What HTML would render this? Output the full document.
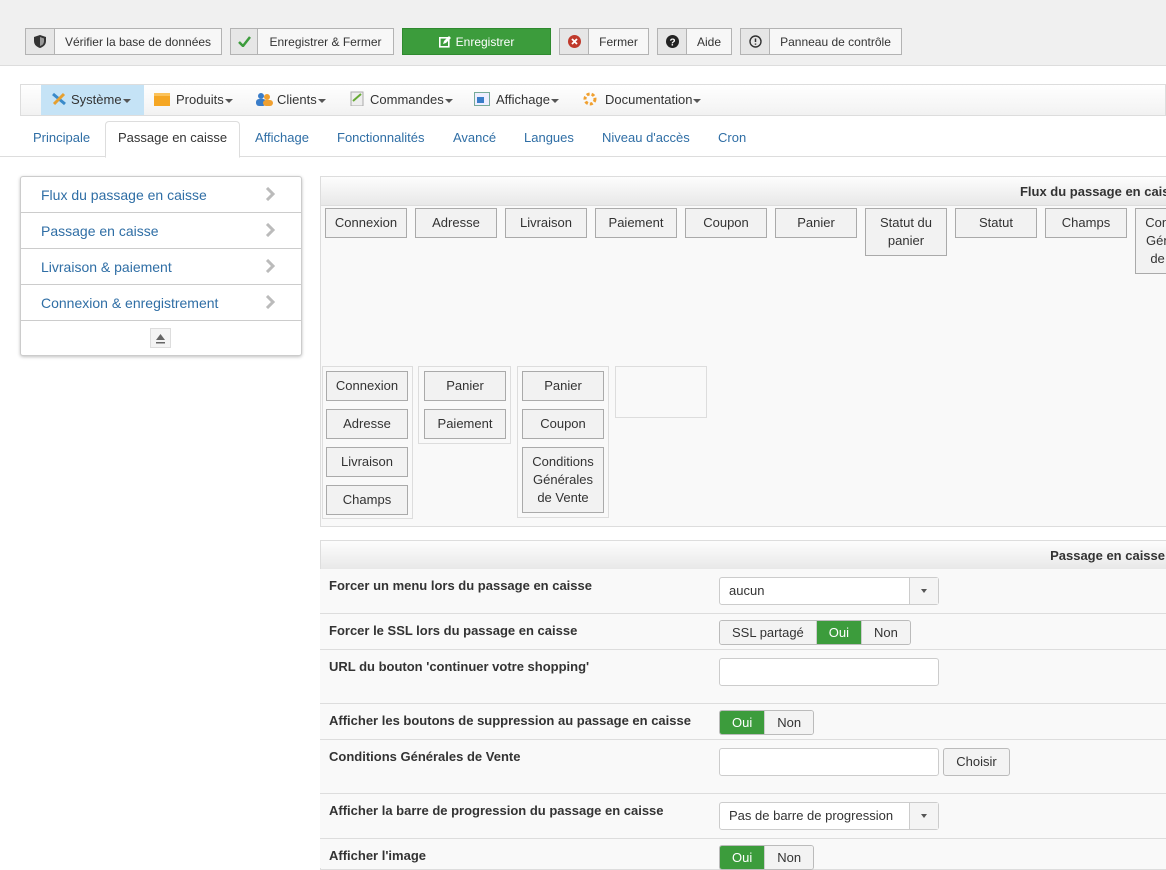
<!DOCTYPE html>
<html><head><meta charset="utf-8"><style>
*{box-sizing:border-box;margin:0;padding:0}
body{width:1166px;height:851px;overflow:hidden;background:#fff;font-family:"Liberation Sans",Arial,sans-serif;font-size:13px;color:#333;position:relative}
.a{position:absolute}
.tb{position:absolute;left:0;top:0;width:1166px;height:66px;background:#f0f0f0;border-bottom:1px solid #ddd}
.btn{position:absolute;top:28px;height:27px;border:1px solid #b3b3b3;background:#f7f7f7;font-size:12px;color:#333;display:flex;align-items:center}
.btn .ic{height:100%;border-right:1px solid #b3b3b3;background:#e6e6e6;display:flex;align-items:center;justify-content:center}
.btn .t{flex:1;text-align:center}
.menu{position:absolute;left:20px;top:84px;width:1146px;height:32px;border:1px solid #ddd;background:linear-gradient(#fff,#f2f2f2)}
.mi{position:absolute;top:0;height:30px;line-height:30px;font-size:13px;color:#333}
.car{display:inline-block;border-top:4px solid #555;border-left:4px solid transparent;border-right:4px solid transparent;vertical-align:middle;margin-left:1px}
.tabs{position:absolute;left:0;top:121px;width:1166px;height:36px;border-bottom:1px solid #ddd}
.tab{position:absolute;top:0;height:36px;line-height:34px;color:#2f6ea5;font-size:13px}
.side{position:absolute;left:20px;top:176px;width:282px;height:180px;border:1px solid #ccc;border-radius:3px;box-shadow:0 1px 3px rgba(0,0,0,.25);background:#fff}
.si{position:absolute;left:0;width:280px;height:36px;border-bottom:1px solid #ccc;color:#2f6ea5;font-size:14px;line-height:36px;padding-left:20px}
.si svg{position:absolute;right:26px;top:10px}
.pan{position:absolute;left:320px;border:1px solid #ddd;background:#f9f9f9}
.ph{height:29px;background:linear-gradient(#fdfdfd,#e8e8e8);border-bottom:1px solid #ddd;text-align:right;font-weight:bold;font-size:13px;line-height:29px;padding-right:15px}
.fb{position:absolute;width:82px;border:1px solid #aaa;background:#f2f2f2;text-align:center;font-size:13px;line-height:18px;padding:5px 2px}
.col{position:absolute;border:1px solid #ddd;background:#f9f9f9}
.row{position:absolute;left:320px;width:860px;border-top:1px solid #ddd;background:#f9f9f9}
.lb{position:absolute;left:9px;top:9px;font-weight:bold;font-size:13px;color:#333}
.inp{position:absolute;left:399px;width:220px;height:28px;border:1px solid #ccc;border-radius:3px;background:#fff}
.sel{position:absolute;left:399px;width:220px;height:28px;border:1px solid #ccc;border-radius:3px;background:#fff;line-height:26px;padding-left:9px;font-size:13px}
.sel i{position:absolute;right:0;top:0;width:29px;height:26px;border-left:1px solid #ccc;background:#f4f4f4}
.sel i:after{content:"";position:absolute;left:11px;top:11px;border-top:4px solid #555;border-left:3px solid transparent;border-right:3px solid transparent}
.tg{position:absolute;left:399px;height:25px;display:flex;border:1px solid #bbb;border-radius:3px;overflow:hidden;font-size:13px}
.tg span{padding:0 12px;line-height:23px;background:#f3f3f3;border-left:1px solid #ccc}
.tg span:first-child{border-left:none}
.tg .on{background:#3c9c3c;color:#fff}
</style></head><body>
<div class="tb"></div>
<div class="btn" style="left:25px;width:197px"><div class="ic" style="width:29px"><svg width="12" height="13" viewBox="0 0 12 13"><path d="M6 0L12 2V6C12 10 9 12 6 13 3 12 0 10 0 6V2Z" fill="#333"/><path d="M6 2L10 3.5V6C10 9 8 10.5 6 11Z" fill="#999"/></svg></div><div class="t">Vérifier la base de données</div></div>
<div class="btn" style="left:230px;width:164px"><div class="ic" style="width:27px"><svg width="13" height="11" viewBox="0 0 13 11"><path d="M1 6L5 10 12 1" stroke="#3c9c3c" stroke-width="2.5" fill="none"/></svg></div><div class="t">Enregistrer &amp; Fermer</div></div>
<div class="btn" style="left:402px;width:149px;background:#3c9c3c;border-color:#2f8a2f;color:#fff;justify-content:center"><svg width="12" height="12" viewBox="0 0 12 12" style="margin-right:5px"><rect x="0.8" y="1.8" width="9" height="9" fill="none" stroke="#fff" stroke-width="1.6"/><path d="M4 8L5 5 10 0 12 2 7 7Z" fill="#fff"/></svg>Enregistrer</div>
<div class="btn" style="left:559px;width:90px"><div class="ic" style="width:29px"><svg width="13" height="13"><circle cx="6.5" cy="6.5" r="6.5" fill="#c0392b"/><path d="M4 4L9 9M9 4L4 9" stroke="#fff" stroke-width="1.8"/></svg></div><div class="t">Fermer</div></div>
<div class="btn" style="left:657px;width:75px"><div class="ic" style="width:29px"><svg width="13" height="13"><circle cx="6.5" cy="6.5" r="6.5" fill="#222"/><text x="6.5" y="10.5" font-size="10" font-weight="bold" fill="#fff" text-anchor="middle" font-family="Liberation Sans">?</text></svg></div><div class="t">Aide</div></div>
<div class="btn" style="left:740px;width:162px"><div class="ic" style="width:29px"><svg width="13" height="13"><circle cx="6.5" cy="6.5" r="5.5" fill="none" stroke="#333" stroke-width="1.4"/><path d="M6.5 3.5V7M6.5 8.5V9.8" stroke="#333" stroke-width="1.5"/></svg></div><div class="t">Panneau de contrôle</div></div>

<div class="menu">
<div class="a" style="left:20px;top:0;width:103px;height:30px;background:#c5e3f6"></div>
<div class="mi" style="left:30px"><svg width="16" height="14" style="vertical-align:-2px;margin-right:4px"><path d="M2 2L14 12" stroke="#3a8ac9" stroke-width="3"/><path d="M13 2L3 12" stroke="#e6a030" stroke-width="3"/></svg>Système<span class="car"></span></div>
<div class="mi" style="left:133px"><svg width="16" height="14" style="vertical-align:-2px;margin-right:6px"><rect x="0" y="1" width="16" height="13" fill="#f5a623"/><rect x="0" y="1" width="16" height="3" fill="#fbc25a"/></svg>Produits<span class="car"></span></div>
<div class="mi" style="left:234px"><svg width="18" height="14" style="vertical-align:-2px;margin-right:4px"><circle cx="6" cy="4" r="3" fill="#3a7dc9"/><rect x="1" y="7" width="10" height="7" rx="3" fill="#3a7dc9"/><circle cx="12" cy="5" r="3" fill="#f0a030"/><rect x="8" y="8" width="10" height="6" rx="3" fill="#f0a030"/></svg>Clients<span class="car"></span></div>
<div class="mi" style="left:328px"><svg width="16" height="15" style="vertical-align:-2px;margin-right:5px"><rect x="2" y="1" width="12" height="14" fill="#eee" stroke="#aaa"/><path d="M4 10L12 3" stroke="#6a3" stroke-width="2"/></svg>Commandes<span class="car"></span></div>
<div class="mi" style="left:453px"><svg width="16" height="14" style="vertical-align:-2px;margin-right:6px"><rect x="0.5" y="0.5" width="15" height="13" fill="#eef" stroke="#7a9"/><rect x="3" y="5" width="7" height="6" fill="#3a7dc9"/></svg>Affichage<span class="car"></span></div>
<div class="mi" style="left:561px"><svg width="16" height="14" style="vertical-align:-2px;margin-right:7px"><circle cx="8" cy="7" r="5" fill="none" stroke="#f0a030" stroke-width="3" stroke-dasharray="3 2"/></svg>Documentation<span class="car"></span></div>
</div>

<div class="tabs">
<div class="a" style="left:105px;top:0;width:135px;height:37px;border:1px solid #ddd;border-bottom-color:#fff;border-radius:4px 4px 0 0;background:#fff"></div>
<div class="tab" style="left:33px">Principale</div>
<div class="tab" style="left:118px;color:#333">Passage en caisse</div>
<div class="tab" style="left:255px">Affichage</div>
<div class="tab" style="left:337px">Fonctionnalités</div>
<div class="tab" style="left:453px">Avancé</div>
<div class="tab" style="left:524px">Langues</div>
<div class="tab" style="left:602px">Niveau d'accès</div>
<div class="tab" style="left:718px">Cron</div>
</div>

<div class="side">
<div class="si" style="top:0">Flux du passage en caisse<svg width="10" height="14"><path d="M2 1L8 7 2 13" stroke="#bbb" stroke-width="3" fill="none"/></svg></div>
<div class="si" style="top:36px">Passage en caisse<svg width="10" height="14"><path d="M2 1L8 7 2 13" stroke="#bbb" stroke-width="3" fill="none"/></svg></div>
<div class="si" style="top:72px">Livraison &amp; paiement<svg width="10" height="14"><path d="M2 1L8 7 2 13" stroke="#bbb" stroke-width="3" fill="none"/></svg></div>
<div class="si" style="top:108px">Connexion &amp; enregistrement<svg width="10" height="14"><path d="M2 1L8 7 2 13" stroke="#bbb" stroke-width="3" fill="none"/></svg></div>
<div class="a" style="left:129px;top:151px;width:21px;height:20px;border:1px solid #ddd;background:#f4f4f4"><svg width="19" height="18"><path d="M5 11L9.5 5 14 11Z" fill="#666"/><rect x="5" y="13" width="9" height="1.5" fill="#666"/></svg></div>
</div>

<div class="pan" style="top:176px;height:351px;width:880px">
<div class="ph">Flux du passage en caisse</div>
</div>
<div class="fb" style="left:325px;top:208px">Connexion</div>
<div class="fb" style="left:415px;top:208px">Adresse</div>
<div class="fb" style="left:505px;top:208px">Livraison</div>
<div class="fb" style="left:595px;top:208px">Paiement</div>
<div class="fb" style="left:685px;top:208px">Coupon</div>
<div class="fb" style="left:775px;top:208px">Panier</div>
<div class="fb" style="left:865px;top:208px">Statut du panier</div>
<div class="fb" style="left:955px;top:208px">Statut</div>
<div class="fb" style="left:1045px;top:208px">Champs</div>
<div class="fb" style="left:1135px;top:208px">Conditions Générales de Vente</div>

<div class="col" style="left:322px;top:366px;width:91px;height:153px"></div>
<div class="col" style="left:418px;top:366px;width:93px;height:78px"></div>
<div class="col" style="left:517px;top:366px;width:92px;height:152px"></div>
<div class="col" style="left:615px;top:366px;width:92px;height:52px"></div>
<div class="fb" style="left:326px;top:371px">Connexion</div>
<div class="fb" style="left:326px;top:409px">Adresse</div>
<div class="fb" style="left:326px;top:447px">Livraison</div>
<div class="fb" style="left:326px;top:485px">Champs</div>
<div class="fb" style="left:424px;top:371px">Panier</div>
<div class="fb" style="left:424px;top:409px">Paiement</div>
<div class="fb" style="left:522px;top:371px">Panier</div>
<div class="fb" style="left:522px;top:409px">Coupon</div>
<div class="fb" style="left:522px;top:447px">Conditions Générales de Vente</div>

<div class="pan" style="top:540px;height:330px;width:854px">
<div class="ph" style="padding-right:8px">Passage en caisse</div>
</div>
<div class="row" style="top:569px;height:44px;border-top:none"><div class="lb">Forcer un menu lors du passage en caisse</div><div class="sel" style="top:8px">aucun<i></i></div></div>
<div class="row" style="top:613px;height:36px"><div class="lb">Forcer le SSL lors du passage en caisse</div><div class="tg" style="top:6px"><span>SSL partagé</span><span class="on">Oui</span><span>Non</span></div></div>
<div class="row" style="top:649px;height:54px"><div class="lb">URL du bouton 'continuer votre shopping'</div><div class="inp" style="top:8px"></div></div>
<div class="row" style="top:703px;height:36px"><div class="lb">Afficher les boutons de suppression au passage en caisse</div><div class="tg" style="top:6px"><span class="on">Oui</span><span>Non</span></div></div>
<div class="row" style="top:739px;height:54px"><div class="lb">Conditions Générales de Vente</div><div class="inp" style="top:8px"></div><div class="a" style="left:623px;top:8px;width:67px;height:28px;border:1px solid #bbb;border-radius:3px;background:#f3f3f3;text-align:center;line-height:26px">Choisir</div></div>
<div class="row" style="top:793px;height:45px"><div class="lb">Afficher la barre de progression du passage en caisse</div><div class="sel" style="top:8px">Pas de barre de progression<i></i></div></div>
<div class="row" style="top:838px;height:30px"><div class="lb">Afficher l'image</div><div class="tg" style="top:6px"><span class="on">Oui</span><span>Non</span></div></div>
</body></html>
